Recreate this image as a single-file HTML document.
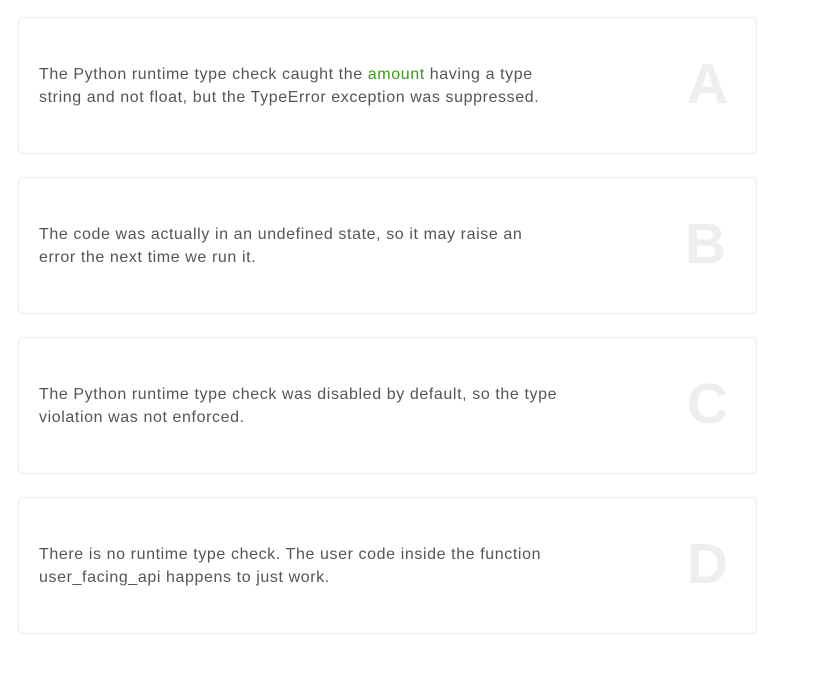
<!DOCTYPE html>
<html><head><style>
body{margin:0;background:#fff;font-family:"Liberation Sans",Arial,sans-serif;}
.card{position:absolute;left:18px;width:737px;height:135px;border:1px solid #ebebeb;border-radius:4px;background:#fff;}
.t{position:absolute;left:20px;top:0;height:135px;width:523px;display:flex;align-items:center;font-size:16px;line-height:23px;color:#555;letter-spacing:0.6px;}
.l{position:absolute;right:28px;top:36px;font-size:57px;font-weight:bold;color:#eeeeee;line-height:60px;}
.g{color:#3a9a1a;}
</style></head><body>
<div class="card" style="top:17px"><div class="t"><div>The Python runtime type check caught the <span class="g">amount</span> having a type string and not float, but the TypeError exception was suppressed.</div></div><div class="l">A</div></div>
<div class="card" style="top:177px"><div class="t"><div>The code was actually in an undefined state, so it may raise an error the next time we run it.</div></div><div class="l" style="right:30px">B</div></div>
<div class="card" style="top:337px"><div class="t"><div>The Python runtime type check was disabled by default, so the type violation was not enforced.</div></div><div class="l">C</div></div>
<div class="card" style="top:497px"><div class="t"><div>There is no runtime type check. The user code inside the function user_facing_api happens to just work.</div></div><div class="l">D</div></div>
</body></html>
